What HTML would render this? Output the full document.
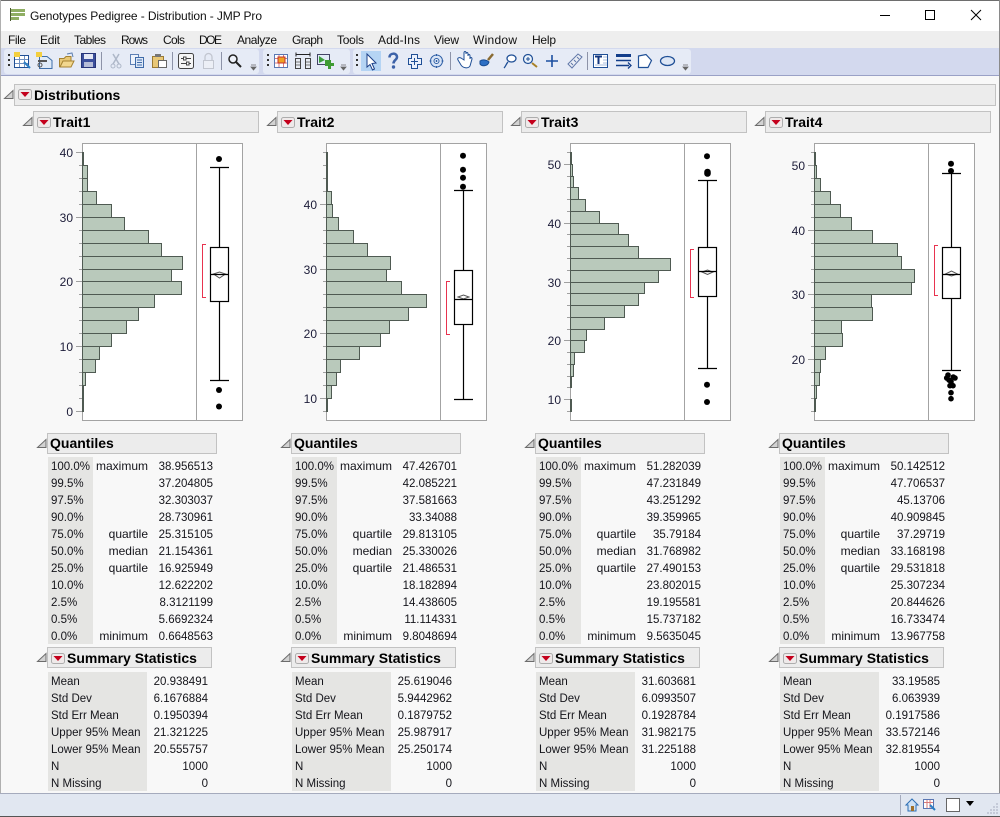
<!DOCTYPE html>
<html><head><meta charset="utf-8"><title>Genotypes Pedigree - Distribution - JMP Pro</title>
<style>
html,body{margin:0;padding:0;background:#f8f8f8;width:1000px;height:817px;overflow:hidden}
svg{display:block;position:absolute;left:0;top:0}
text{font-family:"Liberation Sans",sans-serif;font-size:11.5px;fill:#14141a}
.m{font-size:12px;fill:#111}
.b{font-size:14px;font-weight:bold;fill:#000}
.a{font-size:12px;text-anchor:end;fill:#1c1c38}
.e{text-anchor:end}
.w{font-size:12px}
.bar{fill:#b9c9bb;stroke:#4f5a52;stroke-width:1}
.tk{stroke:#a0a0a0;stroke-width:1;fill:none}
.fr{fill:#fff;stroke:#a3a3a3;stroke-width:1}
.bx{fill:#fff;stroke:#000;stroke-width:1.2}
.ln{fill:none;stroke:#000;stroke-width:1.2}
.dm{fill:none;stroke:#555;stroke-width:1}
.br{fill:none;stroke:#e8334f;stroke-width:1}
.hd{fill:#ececec;stroke:#c2c2c2;stroke-width:1}
.g{fill:#e5e5e3}
</style></head><body>
<svg width="1000" height="817" viewBox="0 0 1000 817" xmlns="http://www.w3.org/2000/svg">
<defs>
<g id="tri"><path d="M.5 8.500L9 .5V8.500Z" fill="#d2d2d2" stroke="#6c6c6c"/></g>
<g id="rb"><rect x=".5" y=".5" width="13" height="10" rx="2" fill="#efeaea" stroke="#adadad"/><path d="M2.500 3H11.500L7 8Z" fill="#c4001c"/></g>
</defs>

<!-- window chrome -->
<rect width="1000" height="817" fill="#f8f8f8"/>
<rect width="1000" height="31" fill="#fff"/>
<rect y="31" width="1000" height="17" fill="#eeeeee"/>
<rect y="48" width="1000" height="27" fill="#d3d9ee"/>
<rect y="75" width="1000" height="1" fill="#9aa1c6"/>
<rect y="0" width="1000" height="1" fill="#6e6e6e"/>
<rect x="0" y="0" width="1" height="817" fill="#b0b0b0"/>
<rect x="999" y="0" width="1" height="817" fill="#8a8a8a"/>

<!-- app icon + title -->
<path d="M10.500 8V21" stroke="#4a5a30"/>
<rect x="11" y="9" width="14" height="3" fill="#8fae63"/><rect x="11" y="13" width="14" height="3" fill="#8fae63"/><rect x="11" y="17" width="8" height="3" fill="#8fae63"/>
<text x="30" y="20" class="m" textLength="232" lengthAdjust="spacing">Genotypes Pedigree - Distribution - JMP Pro</text>
<path d="M880 15.500H890" stroke="#000"/>
<rect x="925.500" y="10.500" width="9" height="9" fill="none" stroke="#000"/>
<path d="M971 10L981 20M981 10L971 20" stroke="#000" fill="none"/>

<!-- menu -->
<g>
<text x="8" y="44" class="m" textLength="18">File</text><text x="40" y="44" class="m" textLength="20">Edit</text><text x="74" y="44" class="m" textLength="32">Tables</text><text x="121" y="44" class="m" textLength="27">Rows</text><text x="163" y="44" class="m" textLength="22">Cols</text><text x="199" y="44" class="m" textLength="23">DOE</text><text x="237" y="44" class="m" textLength="40">Analyze</text><text x="292" y="44" class="m" textLength="31">Graph</text><text x="337" y="44" class="m" textLength="27">Tools</text><text x="378" y="44" class="m" textLength="42">Add-Ins</text><text x="434" y="44" class="m" textLength="25">View</text><text x="473" y="44" class="m" textLength="44">Window</text><text x="532" y="44" class="m" textLength="24">Help</text>
</g>

<!-- toolbars -->
<rect x="4" y="49" width="255" height="25" rx="3" fill="#e6ebf6"/>
<rect x="263" y="49" width="87" height="25" rx="3" fill="#e6ebf6"/>
<rect x="353" y="49" width="338" height="25" rx="3" fill="#e6ebf6"/>
<path d="M8 54h2v2h-2zM8 59h2v2h-2zM8 64h2v2h-2zM267 54h2v2h-2zM267 59h2v2h-2zM267 64h2v2h-2zM356 54h2v2h-2zM356 59h2v2h-2zM356 64h2v2h-2z" fill="#333"/>
<path d="M101.500 52V70M172.500 52V70M221.500 52V70M450.500 52V70M587.500 52V70" stroke="#8d93a8"/>
<path d="M251 65h5M251 67h5L253.500 70Z M341 65h5M341 67h5L343.500 70Z M683 65h5M683 67h5L685.500 70Z" stroke="#666" fill="#666" stroke-width=".8"/>
<!-- group 1 icons -->
<rect x="14.500" y="55.500" width="14" height="12" fill="#fff" stroke="#1f4f96"/><path d="M15 59.500H28M15 63.500H28M19.500 56V67M24.500 56V67" stroke="#6f8fc0"/><rect x="14" y="52" width="6" height="5" fill="#f3cf40"/><path d="M24 62L30 68" stroke="#2c7fc4" stroke-width="2"/>
<path d="M39.500 56.500H47L52 60.500V68.500H39.500Z" fill="#dfeaf7" stroke="#3d6ea8"/><rect x="36" y="52" width="6" height="5" fill="#f3cf40"/><path d="M38 61H47" stroke="#555" stroke-width="2"/><circle cx="40" cy="65" r="2" fill="none" stroke="#555"/>
<path d="M59.500 58.500H64L66 56.500H71V66.500H59.500Z" fill="#e8c877" stroke="#a58231"/><path d="M60 67L63 61H74L71 67Z" fill="#f2d78e" stroke="#a58231"/><path d="M67 54L72 53L73 57" fill="none" stroke="#5d7fb0"/>
<rect x="81.500" y="53.500" width="14" height="14" fill="#3b4f9c" stroke="#27357a"/><rect x="84" y="54" width="9" height="5" fill="#e4e8f5"/><rect x="84" y="62" width="9" height="5" fill="#b6bdd8"/>
<path d="M113 54L119 64M119 54L113 64" stroke="#aeb7c8" stroke-width="1.500"/><circle cx="113" cy="66" r="2" fill="none" stroke="#aeb7c8"/><circle cx="119" cy="66" r="2" fill="none" stroke="#aeb7c8"/>
<rect x="130.500" y="54.500" width="8" height="10" fill="#eef3fb" stroke="#5d80b5"/><rect x="135.500" y="57.500" width="8" height="10" fill="#dde8f7" stroke="#3e6aa8"/><path d="M137 60H142M137 62.500H142M137 65H142" stroke="#3e6aa8"/>
<rect x="152.500" y="56.500" width="11" height="11" fill="#e9c877" stroke="#9a7a33"/><rect x="155" y="54" width="6" height="3" fill="#777"/><rect x="158.500" y="60.500" width="8" height="7" fill="#fff" stroke="#666"/>
<rect x="178.500" y="53.500" width="15" height="15" rx="2" fill="#f6f6f6" stroke="#444"/><path d="M181 58.500H191M181 63.500H191" stroke="#444"/><rect x="183.500" y="57" width="2.500" height="3" fill="#fff" stroke="#444"/><rect x="186.500" y="62" width="2.500" height="3" fill="#fff" stroke="#444"/>
<rect x="203.500" y="60.500" width="10" height="8" fill="#eceff6" stroke="#c2c6d0"/><path d="M205 60V57a3.500 3.500 0 017 0V60" fill="none" stroke="#c2c6d0" stroke-width="1.300"/>
<circle cx="233" cy="59" r="4" fill="#eef2fa" stroke="#222" stroke-width="1.500"/><path d="M236 62L241 67" stroke="#222" stroke-width="2"/>
<!-- group 2 icons -->
<rect x="274.500" y="54.500" width="13" height="13" fill="#fff" stroke="#5a77b3"/><path d="M275 58.500H287M275 63H287M279 55V67M283.500 55V67" stroke="#d77a7a"/><rect x="278" y="57" width="7" height="6" fill="#f0a020" stroke="#c03030"/>
<path d="M296 54.500H310M296 52.500V56.500M310 52.500V56.500" stroke="#222" fill="none"/><rect x="295.500" y="58.500" width="5" height="10" fill="#e8ecf3" stroke="#444"/><rect x="305.500" y="58.500" width="5" height="10" fill="#e8ecf3" stroke="#444"/><path d="M296 62H300M296 65H300M306 62H310M306 65H310" stroke="#777"/>
<rect x="317.500" y="54.500" width="12" height="10" fill="#e2ecf7" stroke="#446"/><path d="M319 56L325 60L319 63Z" fill="#3d9d3d"/><path d="M326 60H332V63H335V66H332V69H329V66H326Z" fill="#3e9b33" transform="translate(-1 0)"/>
<!-- group 3 icons -->
<rect x="361" y="51" width="20" height="20" fill="#b5d4f4"/>
<path d="M367 54L367 67L370 64.500L372.500 70L374.500 69L372 63.500L376 63Z" fill="#fff" stroke="#1c3f88"/>
<path d="M389.500 57.500C389.500 52.500 397 52.500 397 57C397 60 393.500 60 393.500 63.500" fill="none" stroke="#3d62a8" stroke-width="2.500"/><circle cx="393.500" cy="67" r="1.700" fill="#3d62a8"/>
<path d="M411.500 54.500H417.500V58.500H421.500V64.500H417.500V68.500H411.500V64.500H408.500V58.500H411.500Z" fill="#eaf0fb" stroke="#1f4f96"/><path d="M414.500 58V65M411 61.500H418" stroke="#1f4f96"/>
<circle cx="436.500" cy="61" r="6" fill="#d8e4f6" stroke="#2d5ea5"/><circle cx="436.500" cy="61" r="2.500" fill="#eef3fb" stroke="#2d5ea5"/><path d="M436.500 54V68M429.500 61H443.500" stroke="#2d5ea5" stroke-dasharray="2 4"/>
<path d="M458 60L461 65C463 68 468 69 470 66L472 59C472 57 470 57 470 59V56C470 54 468 54 468 56V54C468 52 466 52 466 54V53C466 51 464 51 464 53V60L461 58C459 57 457 58 458 60Z" fill="#fff" stroke="#1f4f96"/>
<path d="M480 61C483 59 487 60 489 62C488 66 482 67 480 64Z" fill="#2d6fc4" stroke="#174a90"/><path d="M488 60L493 54" stroke="#8a6b32" stroke-width="2.500"/>
<ellipse cx="511.500" cy="58.500" rx="4.500" ry="3.500" fill="#fff" stroke="#1f4f96" stroke-width="1.300"/><path d="M508 62C506 64 506 66 504 68" fill="none" stroke="#1f4f96" stroke-width="1.300"/>
<circle cx="528" cy="59" r="4.500" fill="#eaf2fb" stroke="#1f4f96" stroke-width="1.200"/><path d="M526 59H530M528 57V61" stroke="#1f4f96"/><path d="M532 63L537 67" stroke="#a88128" stroke-width="2"/>
<path d="M552 55V67M546 61H558" stroke="#1c4fa0" stroke-width="1.600"/>
<path d="M568 64L578 54L582 57L572 68Z" fill="#e9edf5" stroke="#6077a8"/><path d="M571 63L573 65M574 60L576 62M577 57L579 59" stroke="#6077a8"/>
<rect x="593.500" y="54.500" width="14" height="13" fill="#fff" stroke="#1f4f96"/><path d="M603 57H607M603 60H607M603 63H607M595 65H607" stroke="#a8bddd"/><path d="M595 56.500H602M598.500 56.500V64" stroke="#12357e" stroke-width="2"/>
<path d="M616 55.500H631" stroke="#123d8a" stroke-width="3"/><path d="M616 60.500H631" stroke="#123d8a" stroke-width="1.500"/><path d="M616 65.500H629" stroke="#123d8a" stroke-width="1.500"/><path d="M628 62.500L631 65.500L628 68.500" fill="none" stroke="#123d8a" stroke-width="1.300"/>
<path d="M638.500 56L646 54.500L651.500 60.500L648 67.500H638.500Z" fill="#fff" stroke="#1f4f96" stroke-width="1.200"/>
<ellipse cx="667.500" cy="61" rx="7" ry="4.500" fill="#dde6f5" stroke="#1f4f96" stroke-width="1.300"/>

<!-- status bar -->
<rect y="793" width="1000" height="1" fill="#a5abbd"/>
<rect y="794" width="1000" height="22" fill="#e1e7f1"/>
<rect y="816" width="1000" height="1" fill="#555"/>
<rect x="900" y="795" width="1" height="20" fill="#a5abbd"/>
<path d="M906 805L912 799L918 805H916V811H908V805Z" fill="#cfe2f5" stroke="#2d6fb5"/><rect x="911" y="806" width="3" height="5" fill="#a0702a"/>
<rect x="923.500" y="799.500" width="10" height="9" fill="#fff" stroke="#5a77b3"/><path d="M924 802.500H933M927 800V808M930 800V808" stroke="#d77a7a"/><path d="M930 805L935 810" stroke="#2c7fc4" stroke-width="2"/>
<rect x="946.500" y="798.500" width="13" height="13" fill="#fff" stroke="#666"/>
<path d="M966 801H974L970 806Z" fill="#000"/>
<path d="M996 803h2v2h-2zM993 806h2v2h-2zM996 806h2v2h-2zM990 809h2v2h-2zM993 809h2v2h-2zM996 809h2v2h-2zM987 812h2v2h-2zM990 812h2v2h-2zM993 812h2v2h-2zM996 812h2v2h-2z" fill="#c4cad8"/>

<!-- Distributions header -->
<rect x="14.500" y="84.500" width="981" height="21" class="hd"/>
<use href="#tri" x="4" y="90"/>
<use href="#rb" x="18" y="89"/>
<text x="34" y="100" class="b">Distributions</text>

<!-- Trait 1 plot -->
<rect x="82.500" y="143.500" width="160" height="277" class="fr"/><path d="M196.500 143V420" stroke="#a3a3a3"/>
<path class="tk" d="M79 152.500h3M79 165.500h3M79 178.500h3M79 191.500h3M79 204.500h3M76 217.500h6M79 230.500h3M79 243.500h3M79 256.500h3M79 269.500h3M76 281.500h6M79 294.500h3M79 307.500h3M79 320.500h3M76 346.500h6M79 333.500h3M79 359.500h3M79 372.500h3M79 385.500h3M79 398.500h3M76 411.500h6M76 152.500h6"/>
<path class="bar" d="M82.500 152.500H83.500V165.500H82.500ZM82.500 165.500H87.500V178.500H82.500ZM82.500 178.500H87.500V191.500H82.500ZM82.500 191.500H96.500V204.500H82.500ZM82.500 204.500H111.500V217.500H82.500ZM82.500 217.500H124.500V230.500H82.500ZM82.500 230.500H148.500V243.500H82.500ZM82.500 243.500H161.500V256.500H82.500ZM82.500 256.500H182.500V269.500H82.500ZM82.500 269.500H171.500V281.500H82.500ZM82.500 281.500H181.500V294.500H82.500ZM82.500 294.500H154.500V307.500H82.500ZM82.500 307.500H138.500V320.500H82.500ZM82.500 320.500H126.500V333.500H82.500ZM82.500 333.500H111.500V346.500H82.500ZM82.500 346.500H99.500V359.500H82.500ZM82.500 359.500H95.500V372.500H82.500ZM82.500 372.500H85.500V385.500H82.500ZM82.500 385.500H83.500V398.500H82.500ZM82.500 398.500H83.500V411.500H82.500Z"/>
<text x="73" y="157" class="a">40</text><text x="73" y="222" class="a">30</text><text x="73" y="286" class="a">20</text><text x="73" y="351" class="a">10</text><text x="73" y="416" class="a">0</text>
<path class="ln" d="M219.500 167V380M210 167.500H229M210 380.500H229"/>
<rect x="210.500" y="247.500" width="18" height="54" class="bx"/>
<path class="dm" d="M213.500 274L219.500 272L225.500 274L219.500 278Z"/><path class="ln" d="M210 274.500H229"/>
<path class="br" d="M206 244.500H202.500V297.500H206"/>
<circle cx="219" cy="159" r="3"/><circle cx="219" cy="390" r="3"/><circle cx="219" cy="406.500" r="3"/>

<!-- Trait 2 plot -->
<rect x="326.500" y="143.500" width="160" height="277" class="fr"/><path d="M440.500 143V420" stroke="#a3a3a3"/>
<path class="tk" d="M323 152.500h3M323 165.500h3M323 178.500h3M323 191.500h3M320 204.500h6M323 217.500h3M323 230.500h3M323 243.500h3M323 256.500h3M320 269.500h6M323 281.500h3M323 294.500h3M323 307.500h3M323 320.500h3M320 333.500h6M323 346.500h3M323 359.500h3M323 372.500h3M323 385.500h3M320 398.500h6M323 411.500h3"/>
<path class="bar" d="M326.500 152.500H327.500V165.500H326.500ZM326.500 165.500H327.500V178.500H326.500ZM326.500 178.500H327.500V191.500H326.500ZM326.500 191.500H331.500V204.500H326.500ZM326.500 204.500H332.500V217.500H326.500ZM326.500 217.500H338.500V230.500H326.500ZM326.500 230.500H353.500V243.500H326.500ZM326.500 243.500H367.500V256.500H326.500ZM326.500 256.500H390.500V269.500H326.500ZM326.500 269.500H386.500V281.500H326.500ZM326.500 281.500H401.500V294.500H326.500ZM326.500 294.500H426.500V307.500H326.500ZM326.500 307.500H408.500V320.500H326.500ZM326.500 320.500H389.500V333.500H326.500ZM326.500 333.500H380.500V346.500H326.500ZM326.500 346.500H359.500V359.500H326.500ZM326.500 359.500H340.500V372.500H326.500ZM326.500 372.500H336.500V385.500H326.500ZM326.500 385.500H331.500V398.500H326.500ZM326.500 398.500H327.500V411.500H326.500Z"/>
<text x="317" y="209" class="a">40</text><text x="317" y="274" class="a">30</text><text x="317" y="338" class="a">20</text><text x="317" y="403" class="a">10</text>
<path class="ln" d="M463.500 190V399M454 190.500H473M454 399.500H473"/>
<rect x="454.500" y="270.500" width="18" height="54" class="bx"/>
<path class="dm" d="M458 297L463.500 295L469 297L463.500 299Z"/><path class="ln" d="M454 299.500H473"/>
<path class="br" d="M450 281.500H446.500V334.500H450"/>
<circle cx="463" cy="155.700" r="3"/><circle cx="463" cy="169.700" r="3"/><circle cx="463" cy="177.700" r="3"/><circle cx="463" cy="186.700" r="3"/>

<!-- Trait 3 plot -->
<rect x="570.500" y="143.500" width="160" height="277" class="fr"/><path d="M684.500 143V420" stroke="#a3a3a3"/>
<path class="tk" d="M567 152.500h3M564 164.500h6M567 176.500h3M567 187.500h3M567 199.500h3M567 211.500h3M564 223.500h6M567 234.500h3M567 246.500h3M567 258.500h3M567 270.500h3M564 282.500h6M567 293.500h3M567 305.500h3M567 317.500h3M567 329.500h3M564 340.500h6M567 352.500h3M567 364.500h3M567 376.500h3M567 387.500h3M564 399.500h6M567 411.500h3"/>
<path class="bar" d="M570.500 152.500H571.500V164.500H570.500ZM570.500 164.500H572.500V176.500H570.500ZM570.500 176.500H573.500V187.500H570.500ZM570.500 187.500H578.500V199.500H570.500ZM570.500 199.500H585.500V211.500H570.500ZM570.500 211.500H599.500V223.500H570.500ZM570.500 223.500H618.500V234.500H570.500ZM570.500 234.500H628.500V246.500H570.500ZM570.500 246.500H638.500V258.500H570.500ZM570.500 258.500H670.500V270.500H570.500ZM570.500 270.500H658.500V282.500H570.500ZM570.500 282.500H644.500V293.500H570.500ZM570.500 293.500H638.500V305.500H570.500ZM570.500 305.500H624.500V317.500H570.500ZM570.500 317.500H604.500V329.500H570.500ZM570.500 329.500H586.500V340.500H570.500ZM570.500 340.500H584.500V352.500H570.500ZM570.500 352.500H574.500V364.500H570.500ZM570.500 364.500H573.500V376.500H570.500ZM570.500 376.500H571.500V387.500H570.500ZM570.500 399.500H571.500V411.500H570.500Z"/>
<text x="561" y="169" class="a">50</text><text x="561" y="228" class="a">40</text><text x="561" y="287" class="a">30</text><text x="561" y="345" class="a">20</text><text x="561" y="404" class="a">10</text>
<path class="ln" d="M707.500 180V368M698 180.500H717M698 368.500H717"/>
<rect x="698.500" y="247.500" width="18" height="49" class="bx"/>
<path class="dm" d="M702 272L707.500 270L713 272L707.500 274.500Z"/><path class="ln" d="M698 271.500H717"/>
<path class="br" d="M694 249.500H690.500V297.500H694"/>
<circle cx="707" cy="156.300" r="3"/><circle cx="707.500" cy="172" r="3.300"/><circle cx="707.500" cy="173.500" r="3.300"/><circle cx="707" cy="384.700" r="3"/><circle cx="707" cy="402" r="3"/>

<!-- Trait 4 plot -->
<rect x="814.500" y="143.500" width="160" height="277" class="fr"/><path d="M928.500 143V420" stroke="#a3a3a3"/>
<path class="tk" d="M811 152.500h3M808 165.500h6M811 178.500h3M811 191.500h3M811 204.500h3M811 217.500h3M808 230.500h6M811 243.500h3M811 256.500h3M811 269.500h3M811 282.500h3M808 294.500h6M811 307.500h3M811 320.500h3M811 333.500h3M811 346.500h3M808 359.500h6M811 372.500h3M811 385.500h3M811 398.500h3M811 411.500h3"/>
<path class="bar" d="M814.500 152.500H815.500V165.500H814.500ZM814.500 165.500H816.500V178.500H814.500ZM814.500 178.500H820.500V191.500H814.500ZM814.500 191.500H830.500V204.500H814.500ZM814.500 204.500H840.500V217.500H814.500ZM814.500 217.500H851.500V230.500H814.500ZM814.500 230.500H872.500V243.500H814.500ZM814.500 243.500H897.500V256.500H814.500ZM814.500 256.500H901.500V269.500H814.500ZM814.500 269.500H914.500V282.500H814.500ZM814.500 282.500H911.500V294.500H814.500ZM814.500 294.500H871.500V307.500H814.500ZM814.500 307.500H872.500V320.500H814.500ZM814.500 320.500H841.500V333.500H814.500ZM814.500 333.500H842.500V346.500H814.500ZM814.500 346.500H825.500V359.500H814.500ZM814.500 359.500H820.500V372.500H814.500ZM814.500 372.500H819.500V385.500H814.500ZM814.500 385.500H816.500V398.500H814.500ZM814.500 398.500H815.500V411.500H814.500Z"/>
<text x="805" y="170" class="a">50</text><text x="805" y="235" class="a">40</text><text x="805" y="299" class="a">30</text><text x="805" y="364" class="a">20</text>
<path class="ln" d="M951.500 173V370M942 173.500H961M942 370.500H961"/>
<rect x="942.500" y="247.500" width="18" height="51" class="bx"/>
<path class="dm" d="M945.500 274L951.500 271L957.500 274L951.500 276Z"/><path class="ln" d="M942 274.500H961"/>
<path class="br" d="M938 245.500H934.500V295.500H938"/>
<circle cx="951" cy="163.700" r="3"/><circle cx="951" cy="171" r="3"/><circle cx="948" cy="375" r="2.800"/><circle cx="946.700" cy="378" r="2.800"/><circle cx="949" cy="380" r="2.800"/><circle cx="953.300" cy="377" r="2.800"/><circle cx="955" cy="378" r="2.800"/><circle cx="951" cy="381.700" r="2.800"/><circle cx="950" cy="385.700" r="2.800"/><circle cx="953" cy="385.700" r="2.800"/><circle cx="951" cy="392.700" r="2.800"/><circle cx="951" cy="398.700" r="2.800"/>

<!-- Trait 1 tables -->
<g>
<rect x="33.500" y="111.500" width="225" height="21" class="hd"/><use href="#tri" x="23" y="117"/><use href="#rb" x="37" y="117"/><text x="53" y="127" class="b">Trait1</text>
<rect x="47.500" y="433.500" width="169" height="20" class="hd"/><use href="#tri" x="37" y="439"/><text x="50" y="448" class="b">Quantiles</text>
<rect x="48" y="457" width="45" height="187" class="g"/>
<text x="51" y="470">100.0%</text><text x="148" y="470" class="e w">maximum</text><text x="213" y="470" class="e">38.956513</text>
<text x="51" y="487">99.5%</text><text x="213" y="487" class="e">37.204805</text>
<text x="51" y="504">97.5%</text><text x="213" y="504" class="e">32.303037</text>
<text x="51" y="521">90.0%</text><text x="213" y="521" class="e">28.730961</text>
<text x="51" y="538">75.0%</text><text x="148" y="538" class="e w">quartile</text><text x="213" y="538" class="e">25.315105</text>
<text x="51" y="555">50.0%</text><text x="148" y="555" class="e w">median</text><text x="213" y="555" class="e">21.154361</text>
<text x="51" y="572">25.0%</text><text x="148" y="572" class="e w">quartile</text><text x="213" y="572" class="e">16.925949</text>
<text x="51" y="589">10.0%</text><text x="213" y="589" class="e">12.622202</text>
<text x="51" y="606">2.5%</text><text x="213" y="606" class="e">8.3121199</text>
<text x="51" y="623">0.5%</text><text x="213" y="623" class="e">5.6692324</text>
<text x="51" y="640">0.0%</text><text x="148" y="640" class="e w">minimum</text><text x="213" y="640" class="e">0.6648563</text>
<rect x="47.500" y="647.500" width="164" height="20" class="hd"/><use href="#tri" x="37" y="653"/><use href="#rb" x="51" y="653"/><text x="67" y="663" class="b">Summary Statistics</text>
<rect x="48" y="672" width="99" height="119" class="g"/>
<text x="51" y="685">Mean</text><text x="208" y="685" class="e">20.938491</text>
<text x="51" y="702">Std Dev</text><text x="208" y="702" class="e">6.1676884</text>
<text x="51" y="719">Std Err Mean</text><text x="208" y="719" class="e">0.1950394</text>
<text x="51" y="736">Upper 95% Mean</text><text x="208" y="736" class="e">21.321225</text>
<text x="51" y="753">Lower 95% Mean</text><text x="208" y="753" class="e">20.555757</text>
<text x="51" y="770">N</text><text x="208" y="770" class="e">1000</text>
<text x="51" y="787">N Missing</text><text x="208" y="787" class="e">0</text>
</g>

<!-- Trait 2 tables -->
<g transform="translate(244 0)">
<rect x="33.500" y="111.500" width="225" height="21" class="hd"/><use href="#tri" x="23" y="117"/><use href="#rb" x="37" y="117"/><text x="53" y="127" class="b">Trait2</text>
<rect x="47.500" y="433.500" width="169" height="20" class="hd"/><use href="#tri" x="37" y="439"/><text x="50" y="448" class="b">Quantiles</text>
<rect x="48" y="457" width="45" height="187" class="g"/>
<text x="51" y="470">100.0%</text><text x="148" y="470" class="e w">maximum</text><text x="213" y="470" class="e">47.426701</text>
<text x="51" y="487">99.5%</text><text x="213" y="487" class="e">42.085221</text>
<text x="51" y="504">97.5%</text><text x="213" y="504" class="e">37.581663</text>
<text x="51" y="521">90.0%</text><text x="213" y="521" class="e">33.34088</text>
<text x="51" y="538">75.0%</text><text x="148" y="538" class="e w">quartile</text><text x="213" y="538" class="e">29.813105</text>
<text x="51" y="555">50.0%</text><text x="148" y="555" class="e w">median</text><text x="213" y="555" class="e">25.330026</text>
<text x="51" y="572">25.0%</text><text x="148" y="572" class="e w">quartile</text><text x="213" y="572" class="e">21.486531</text>
<text x="51" y="589">10.0%</text><text x="213" y="589" class="e">18.182894</text>
<text x="51" y="606">2.5%</text><text x="213" y="606" class="e">14.438605</text>
<text x="51" y="623">0.5%</text><text x="213" y="623" class="e">11.114331</text>
<text x="51" y="640">0.0%</text><text x="148" y="640" class="e w">minimum</text><text x="213" y="640" class="e">9.8048694</text>
<rect x="47.500" y="647.500" width="164" height="20" class="hd"/><use href="#tri" x="37" y="653"/><use href="#rb" x="51" y="653"/><text x="67" y="663" class="b">Summary Statistics</text>
<rect x="48" y="672" width="99" height="119" class="g"/>
<text x="51" y="685">Mean</text><text x="208" y="685" class="e">25.619046</text>
<text x="51" y="702">Std Dev</text><text x="208" y="702" class="e">5.9442962</text>
<text x="51" y="719">Std Err Mean</text><text x="208" y="719" class="e">0.1879752</text>
<text x="51" y="736">Upper 95% Mean</text><text x="208" y="736" class="e">25.987917</text>
<text x="51" y="753">Lower 95% Mean</text><text x="208" y="753" class="e">25.250174</text>
<text x="51" y="770">N</text><text x="208" y="770" class="e">1000</text>
<text x="51" y="787">N Missing</text><text x="208" y="787" class="e">0</text>
</g>

<!-- Trait 3 tables -->
<g transform="translate(488 0)">
<rect x="33.500" y="111.500" width="225" height="21" class="hd"/><use href="#tri" x="23" y="117"/><use href="#rb" x="37" y="117"/><text x="53" y="127" class="b">Trait3</text>
<rect x="47.500" y="433.500" width="169" height="20" class="hd"/><use href="#tri" x="37" y="439"/><text x="50" y="448" class="b">Quantiles</text>
<rect x="48" y="457" width="45" height="187" class="g"/>
<text x="51" y="470">100.0%</text><text x="148" y="470" class="e w">maximum</text><text x="213" y="470" class="e">51.282039</text>
<text x="51" y="487">99.5%</text><text x="213" y="487" class="e">47.231849</text>
<text x="51" y="504">97.5%</text><text x="213" y="504" class="e">43.251292</text>
<text x="51" y="521">90.0%</text><text x="213" y="521" class="e">39.359965</text>
<text x="51" y="538">75.0%</text><text x="148" y="538" class="e w">quartile</text><text x="213" y="538" class="e">35.79184</text>
<text x="51" y="555">50.0%</text><text x="148" y="555" class="e w">median</text><text x="213" y="555" class="e">31.768982</text>
<text x="51" y="572">25.0%</text><text x="148" y="572" class="e w">quartile</text><text x="213" y="572" class="e">27.490153</text>
<text x="51" y="589">10.0%</text><text x="213" y="589" class="e">23.802015</text>
<text x="51" y="606">2.5%</text><text x="213" y="606" class="e">19.195581</text>
<text x="51" y="623">0.5%</text><text x="213" y="623" class="e">15.737182</text>
<text x="51" y="640">0.0%</text><text x="148" y="640" class="e w">minimum</text><text x="213" y="640" class="e">9.5635045</text>
<rect x="47.500" y="647.500" width="164" height="20" class="hd"/><use href="#tri" x="37" y="653"/><use href="#rb" x="51" y="653"/><text x="67" y="663" class="b">Summary Statistics</text>
<rect x="48" y="672" width="99" height="119" class="g"/>
<text x="51" y="685">Mean</text><text x="208" y="685" class="e">31.603681</text>
<text x="51" y="702">Std Dev</text><text x="208" y="702" class="e">6.0993507</text>
<text x="51" y="719">Std Err Mean</text><text x="208" y="719" class="e">0.1928784</text>
<text x="51" y="736">Upper 95% Mean</text><text x="208" y="736" class="e">31.982175</text>
<text x="51" y="753">Lower 95% Mean</text><text x="208" y="753" class="e">31.225188</text>
<text x="51" y="770">N</text><text x="208" y="770" class="e">1000</text>
<text x="51" y="787">N Missing</text><text x="208" y="787" class="e">0</text>
</g>

<!-- Trait 4 tables -->
<g transform="translate(732 0)">
<rect x="33.500" y="111.500" width="225" height="21" class="hd"/><use href="#tri" x="23" y="117"/><use href="#rb" x="37" y="117"/><text x="53" y="127" class="b">Trait4</text>
<rect x="47.500" y="433.500" width="169" height="20" class="hd"/><use href="#tri" x="37" y="439"/><text x="50" y="448" class="b">Quantiles</text>
<rect x="48" y="457" width="45" height="187" class="g"/>
<text x="51" y="470">100.0%</text><text x="148" y="470" class="e w">maximum</text><text x="213" y="470" class="e">50.142512</text>
<text x="51" y="487">99.5%</text><text x="213" y="487" class="e">47.706537</text>
<text x="51" y="504">97.5%</text><text x="213" y="504" class="e">45.13706</text>
<text x="51" y="521">90.0%</text><text x="213" y="521" class="e">40.909845</text>
<text x="51" y="538">75.0%</text><text x="148" y="538" class="e w">quartile</text><text x="213" y="538" class="e">37.29719</text>
<text x="51" y="555">50.0%</text><text x="148" y="555" class="e w">median</text><text x="213" y="555" class="e">33.168198</text>
<text x="51" y="572">25.0%</text><text x="148" y="572" class="e w">quartile</text><text x="213" y="572" class="e">29.531818</text>
<text x="51" y="589">10.0%</text><text x="213" y="589" class="e">25.307234</text>
<text x="51" y="606">2.5%</text><text x="213" y="606" class="e">20.844626</text>
<text x="51" y="623">0.5%</text><text x="213" y="623" class="e">16.733474</text>
<text x="51" y="640">0.0%</text><text x="148" y="640" class="e w">minimum</text><text x="213" y="640" class="e">13.967758</text>
<rect x="47.500" y="647.500" width="164" height="20" class="hd"/><use href="#tri" x="37" y="653"/><use href="#rb" x="51" y="653"/><text x="67" y="663" class="b">Summary Statistics</text>
<rect x="48" y="672" width="99" height="119" class="g"/>
<text x="51" y="685">Mean</text><text x="208" y="685" class="e">33.19585</text>
<text x="51" y="702">Std Dev</text><text x="208" y="702" class="e">6.063939</text>
<text x="51" y="719">Std Err Mean</text><text x="208" y="719" class="e">0.1917586</text>
<text x="51" y="736">Upper 95% Mean</text><text x="208" y="736" class="e">33.572146</text>
<text x="51" y="753">Lower 95% Mean</text><text x="208" y="753" class="e">32.819554</text>
<text x="51" y="770">N</text><text x="208" y="770" class="e">1000</text>
<text x="51" y="787">N Missing</text><text x="208" y="787" class="e">0</text>
</g>
</svg>
</body></html>
